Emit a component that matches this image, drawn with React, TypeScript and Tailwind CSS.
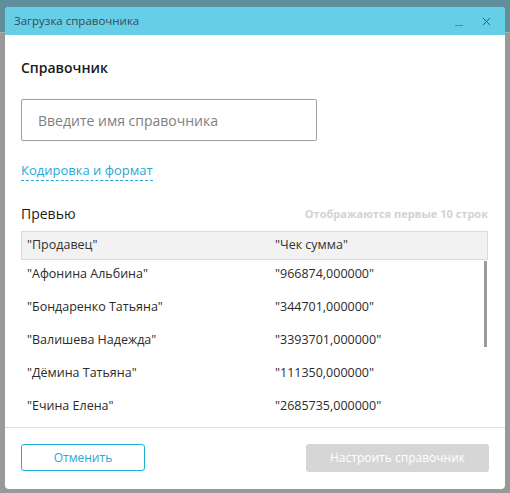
import { X } from 'lucide-react';

const rows = [
  ['"Афонина Альбина"', '"966874,000000"'],
  ['"Бондаренко Татьяна"', '"344701,000000"'],
  ['"Валишева Надежда"', '"3393701,000000"'],
  ['"Дёмина Татьяна"', '"111350,000000"'],
  ['"Ечина Елена"', '"2685735,000000"'],
];

export default function App() {
  return (
    <div
      className="relative w-[510px] h-[493px] overflow-hidden bg-[#999999]"
      style={{ fontFamily: '"Open Sans", "Noto Sans", sans-serif' }}
    >
      {/* затемнённый фон приложения */}
      <div className="h-[33px] bg-[#5f8f9b] border-b border-[#a9a9a9]" />

      {/* диалог */}
      <div className="absolute left-[5px] top-[7px] w-[500px] h-[482px] bg-white rounded-[4px] flex flex-col">
        <div className="h-[28px] flex-shrink-0 bg-[#66cee7] rounded-t-[4px] flex items-center pl-[9px] pr-[12px]">
          <span className="text-[11.5px] text-[#3a4a55] flex-1">Загрузка справочника</span>
          <span className="w-[8px] h-[1px] bg-[#4f8a99] mt-[8px] mr-[17px]" />
          <X size={13} strokeWidth={1.5} className="text-[#2d4450]" />
        </div>

        <div className="flex-1 flex flex-col px-[16px] pt-[23px]">
          <h3 className="text-[14px] leading-[20px] font-semibold text-[#1a1a1a]">Справочник</h3>

          <div className="mt-[21px] w-[296px] h-[42px] border border-[#9e9e9e] rounded-[2px] flex items-center px-[16px]">
            <span className="text-[14px] text-[#808080]">Введите имя справочника</span>
          </div>

          <div className="mt-[19px] leading-[18px]">
            <span className="text-[13px] text-[#26a9d6] border-b border-dashed border-[#26a9d6] pb-[1px]">
              Кодировка и формат
            </span>
          </div>

          <div className="mt-[25px] flex items-center justify-between pr-[1px]">
            <h3 className="text-[14px] leading-[20px] font-medium text-[#1a1a1a]">Превью</h3>
            <span className="text-[11px] font-bold text-[#d2d2d2]">Отображаются первые 10 строк</span>
          </div>

          <div className="mt-[7px] w-[467px] relative">
            <div className="h-[29px] bg-[#f2f2f2] border border-[#dcdcdc] flex items-center text-[12.5px] text-[#333]">
              <span className="w-[253px] pl-[5px]">"Продавец"</span>
              <span>"Чек сумма"</span>
            </div>
            <div>
              {rows.map(([name, sum]) => (
                <div key={name} className="h-[33px] flex items-start pt-[5px] leading-[17px] text-[12.5px] text-[#2b2b2b]">
                  <span className="w-[254px] pl-[6px]">{name}</span>
                  <span>{sum}</span>
                </div>
              ))}
            </div>
            <div className="absolute right-[1px] top-[30px] w-[3px] h-[86px] bg-[#9a9a9a]" />
          </div>
        </div>

        <div className="h-[62px] flex-shrink-0 border-t border-[#dddddd] flex items-start justify-between px-[16px] pt-[16px]">
          <button className="w-[124px] h-[27px] border border-[#1eb0d9] rounded-[3px] text-[12px] leading-[16px] text-[#2aa6d4] flex items-center justify-center">
            Отменить
          </button>
          <button className="w-[183px] h-[28px] bg-[#d6d6d6] rounded-[3px] text-[12px] leading-[16px] text-white flex items-center justify-center">
            Настроить справочник
          </button>
        </div>
      </div>
    </div>
  );
}
